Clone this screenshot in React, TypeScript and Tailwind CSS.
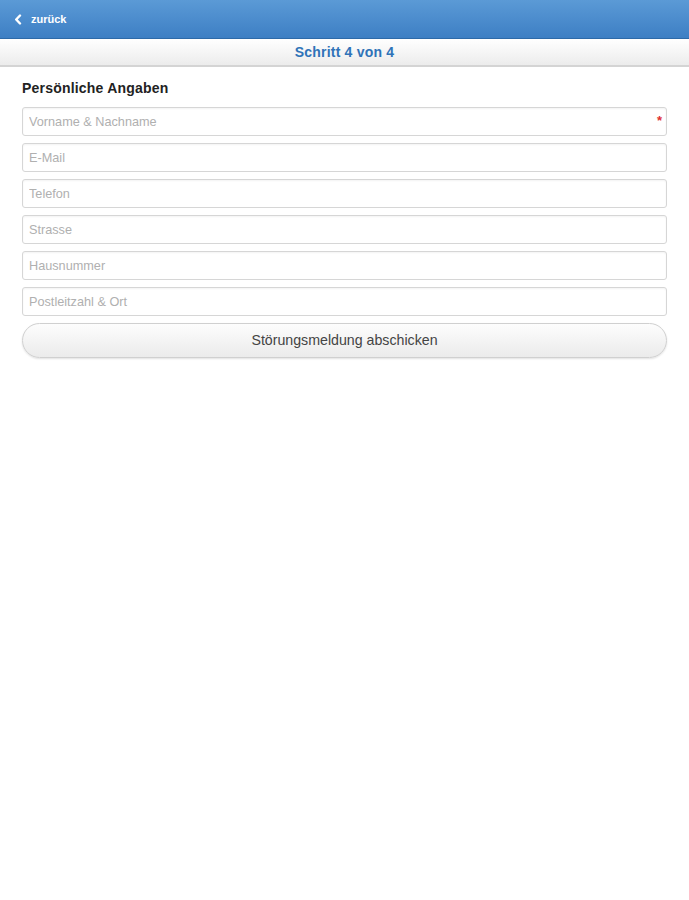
import React from "react";

const fields = [
  { placeholder: "Vorname & Nachname", required: true },
  { placeholder: "E-Mail" },
  { placeholder: "Telefon" },
  { placeholder: "Strasse" },
  { placeholder: "Hausnummer" },
  { placeholder: "Postleitzahl & Ort" },
];

const App = () => {
  return (
    <div
      className="min-h-screen bg-white text-black"
      style={{ fontFamily: '"Liberation Sans", Arial, sans-serif' }}
    >
      <div className="h-[39px] bg-gradient-to-b from-[#5b9ad6] to-[#3d7fc4] border-b border-[#2d6aa8] flex items-center pl-[14px]">
        <button className="flex items-center gap-[9px] text-white text-[11px] font-bold">
          <svg width="8" height="11" viewBox="0 0 8 11">
            <path d="M6 1.5 L2.2 5.5 L6 9.5" stroke="white" strokeWidth="2.4" fill="none" strokeLinecap="round" strokeLinejoin="round" />
          </svg>
          zurück
        </button>
      </div>

      <div className="h-[28px] bg-gradient-to-b from-[#ffffff] to-[#ececec] border-b-2 border-[#d4d4d4] flex items-center justify-center">
        <span className="text-[14px] font-bold text-[#2f73b8] tracking-[0.2px]">Schritt 4 von 4</span>
      </div>

      <div className="px-[22px] pt-[11px]">
        <h2 className="text-[14px] font-bold text-[#222] mb-[8px] tracking-[0.2px]">Persönliche Angaben</h2>

        <div className="flex flex-col gap-[7px]">
          {fields.map((f) => (
            <div key={f.placeholder} className="relative">
              <input
                placeholder={f.placeholder}
                className="w-full h-[29px] border border-[#d6d6d6] rounded-[3px] px-[6px] text-[12.7px] text-[#555] placeholder:text-[#b0b0b0] outline-none shadow-[inset_0_1px_2px_rgba(0,0,0,0.05)]"
              />
              {f.required && (
                <span className="absolute right-[5px] top-[4px] text-[#e03030] text-[13px] font-bold">*</span>
              )}
            </div>
          ))}
        </div>

        <button className="mt-[7px] w-full h-[35px] rounded-full border border-[#d0d0d0] bg-gradient-to-b from-[#fdfdfd] to-[#ebebeb] shadow-[0_1px_2px_rgba(0,0,0,0.12)] text-[14.2px] text-[#444]">
          Störungsmeldung abschicken
        </button>
      </div>
    </div>
  );
};

export default App;
